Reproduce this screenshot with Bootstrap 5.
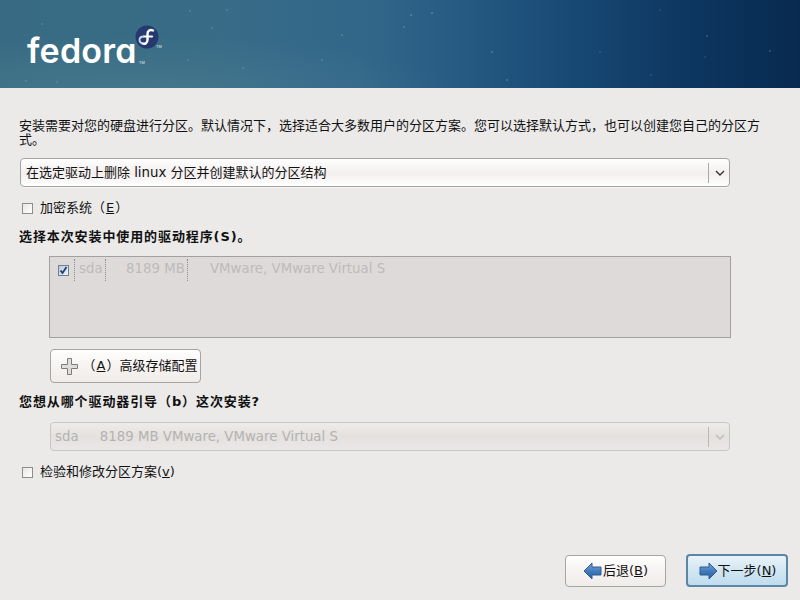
<!DOCTYPE html>
<html lang="zh-CN">
<head>
<meta charset="utf-8">
<title>Fedora 安装</title>
<link href="https://cdn.jsdelivr.net/npm/bootstrap@5.3.0/dist/css/bootstrap.min.css" rel="stylesheet">
<style>
html,body{height:100%;}
body{width:800px;height:600px;overflow:hidden;background:#ebeae9;color:#111;font-family:"DejaVu Sans","Noto Sans CJK TC",sans-serif;font-size:13px;line-height:14px;font-feature-settings:"chws" 0,"palt" 0,"halt" 0;text-spacing-trim:space-all;}
.inst-page{height:600px;}
.inst-lat{font-size:13.33px;}
.inst-banner{height:88px;flex:none;position:relative;overflow:hidden;
 background:
 radial-gradient(circle 1px at 190px 11px,#86a9b6,transparent),
 radial-gradient(circle 1px at 212px 28px,#86a9b6,transparent),
 radial-gradient(circle 1px at 227px 10px,#86a9b6,transparent),
 radial-gradient(circle 1px at 342px 35px,#86a9b6,transparent),
 radial-gradient(circle 1px at 243px 68px,#86a9b6,transparent),
 radial-gradient(circle 1px at 322px 60px,#86a9b6,transparent),
 radial-gradient(circle 1px at 188px 60px,#7a9dac,transparent),
 radial-gradient(circle 1px at 26px 81px,#86a9b6,transparent),
 radial-gradient(circle 1px at 57px 82px,#7a9dac,transparent),
 radial-gradient(circle 1px at 42px 24px,#7a9dac,transparent),
 radial-gradient(circle 1.5px at 411px 15px,#6b93ad,transparent),
 radial-gradient(circle 1.5px at 432px 13px,#6b93ad,transparent),
 radial-gradient(circle 1.5px at 404px 27px,#5f88a4,transparent),
 radial-gradient(circle 1.5px at 492px 52px,#5f88a4,transparent),
 radial-gradient(circle 1.5px at 507px 80px,#5f88a4,transparent),
 radial-gradient(circle 1px at 600px 52px,#4f7898,transparent),
 radial-gradient(circle 1px at 651px 75px,#4f7898,transparent),
 radial-gradient(circle 1.5px at 707px 36px,#3f6a8e,transparent),
 radial-gradient(circle 1.5px at 770px 51px,#3f6a8e,transparent),
 radial-gradient(circle 1px at 705px 57px,#3f6a8e,transparent),
 radial-gradient(circle 1px at 660px 10px,#3f6a8e,transparent),
 radial-gradient(ellipse 330px 60px at 130px 95px,rgba(110,155,160,.25),transparent),
 linear-gradient(90deg,#386b83 0%,#386c86 25%,#33678a 45%,#265a82 58%,#174874 72%,#0d3660 86%,#082a50 100%);}
.inst-logo{position:absolute;left:27px;top:31px;color:#fff;font-family:"Inter",sans-serif;font-feature-settings:"cv11" 1;font-size:34px;line-height:40px;letter-spacing:.2px;font-weight:600;}
.inst-mark{position:absolute;left:135px;top:25px;}
.inst-tm{position:absolute;color:#dfe9ee;font-size:4px;line-height:4px;font-family:"Liberation Sans",sans-serif;}
.inst-tm1{left:139px;top:61px;}
.inst-tm2{left:156px;top:45px;}
.inst-main{flex:1;padding:31px 12px 13px 19px;min-height:0;}
.inst-intro{margin:0 0 11px;width:745px;}
.inst-combo{height:29px;width:710px;margin-left:1px;border:1px solid #a5a3a0;border-radius:4px;background:linear-gradient(#fff,#f5f1f0 45%,#f3efee 55%,#fff);padding:0 0 0 5px;box-shadow:0 1px 0 #f6f6f6;}
.inst-combo-sep{width:1px;height:20px;background:#aaa9a6;margin-right:5px;}
.inst-combo-arrow{width:12px;margin-right:3px;}
.inst-combo.inst-off{width:680px;margin-left:31px;height:29px;border-color:#c9c7c4;background:linear-gradient(#eeecea,#e4e1df 50%,#eae7e6);color:#b4b2b0;padding-left:4px;box-shadow:none;}
.inst-off .inst-combo-sep{background:#b9b7b4;}
.inst-check{margin:14px 0 0 3px;height:14px;gap:7px;}
.inst-box{width:11px;height:11px;border:1px solid #8d8d8b;background:linear-gradient(135deg,#e6e6e4,#fff);flex:none;}
.inst-title{font-weight:700;letter-spacing:.9px;margin:15px 0 0 0;}
.inst-list{width:682px;height:82px;margin:12px 0 0 30px;background:#dedada;border:1px solid #a3a09d;padding:5px 0 0 8px;color:#bdbbb9;}
.inst-cb{width:11px;height:11px;border:1px solid #6f7f92;background:linear-gradient(135deg,#b9c9da,#f0f4f8);margin-right:5px;}
.inst-cell{border-right:1px dotted #8b8b88;height:22px;line-height:14px;padding-top:3px;}
.inst-c0{border-left:1px dotted #8b8b88;padding-left:4px;width:32px;}
.inst-c1{width:82px;padding-left:20px;}
.inst-c2{padding-left:22px;border:0;}
.inst-list-row{height:22px;margin-top:-3px;}
.btn.inst-btn{display:flex;align-items:center;justify-content:center;--bs-btn-padding-x:0;--bs-btn-padding-y:0;font-size:13px;line-height:14px;color:#111;border:1px solid #a7a5a2;border-radius:4px;background:linear-gradient(#fff,#f6f3f2 50%,#efecea);}
.inst-add{width:151px;height:34px;margin:11px 0 0 31px;justify-content:flex-start;padding-left:7px;gap:5px;}
.inst-title2{margin-top:12px;}
.inst-combo2{margin-top:13px;}
.inst-back{width:101px;height:32px;}
.btn.inst-next{width:102px;height:33px;border:2px solid #5c86a6;background:linear-gradient(#e9f3f9,#d2e6f2 50%,#bfdcee);}
.inst-foot{gap:20px;}
.inst-key{margin:0 1px;}
u{text-underline-offset:1px;}
</style>
</head>
<body>
<div class="inst-page d-flex flex-column">
  <div class="inst-banner">
    <span class="inst-logo">fedora</span>
    <svg class="inst-mark" width="24" height="24" viewBox="0 0 24 24" aria-hidden="true">
      <circle cx="12" cy="12" r="11.5" fill="#26396f"/>
      <path d="M18 5.500c-3-1.200-5.500 .3-5.500 3.500v6c0 2.800-2.500 4.500-5 3.500" fill="none" stroke="#fff" stroke-width="2.400" stroke-linecap="round"/>
      <path d="M9 11.500h8" fill="none" stroke="#fff" stroke-width="2.200" stroke-linecap="round"/>
      <path d="M7.500 18.500c-2-.6-3-2-3-3.500 0-2 1.800-3.500 4.500-3.500" fill="none" stroke="#c9d6ea" stroke-width="1.800"/>
    </svg>
    <span class="inst-tm inst-tm1">TM</span>
    <span class="inst-tm inst-tm2">TM</span>
  </div>
  <div class="inst-main d-flex flex-column">
    <p class="inst-intro">安装需要对您的硬盘进行分区。默认情况下，选择适合大多数用户的分区方案。您可以选择默认方式，也可以创建您自己的分区方式。</p>
    <div class="inst-combo d-flex align-items-center">
      <span class="flex-grow-1">在选定驱动上删除 <span class="inst-lat">linux</span> 分区并创建默认的分区结构</span>
      <span class="inst-combo-sep"></span>
      <svg class="inst-combo-arrow" width="12" height="10" viewBox="0 0 12 10" aria-hidden="true"><path d="M2 3l4 4 4-4" fill="none" stroke="#333" stroke-width="1.400"/></svg>
    </div>
    <div class="inst-check d-flex align-items-center"><span class="inst-box"></span><span>加密系统（<u class="inst-key">E</u>）</span></div>
    <div class="inst-title">选择本次安装中使用的驱动程序(S)。</div>
    <div class="inst-list">
      <div class="inst-list-row d-flex align-items-center">
        <span class="inst-cb d-flex align-items-center justify-content-center">
          <svg width="9" height="9" viewBox="0 0 9 9" aria-hidden="true"><path d="M1.500 4.500l2 2.500 4-6" fill="none" stroke="#1d3f78" stroke-width="1.800"/></svg>
        </span>
        <span class="inst-cell inst-c0 inst-lat">sda</span>
        <span class="inst-cell inst-c1 inst-lat">8189 MB</span>
        <span class="inst-cell inst-c2 inst-lat">VMware, VMware Virtual S</span>
      </div>
    </div>
    <button type="button" class="btn inst-btn inst-add">
      <svg width="17" height="17" viewBox="0 0 17 17" aria-hidden="true"><path d="M6.500 .5h4v6h6v4h-6v6h-4v-6h-6v-4h6z" fill="#dedddb" stroke="#7d7d7b"/></svg>
      <span>（<u class="inst-key">A</u>）高级存储配置</span>
    </button>
    <div class="inst-title inst-title2">您想从哪个驱动器引导（b）这次安装?</div>
    <div class="inst-combo inst-off inst-combo2 d-flex align-items-center">
      <span class="flex-grow-1 inst-lat">sda&nbsp;&nbsp;&nbsp;&nbsp;&nbsp;8189 MB VMware, VMware Virtual S</span>
      <span class="inst-combo-sep"></span>
      <svg class="inst-combo-arrow" width="12" height="10" viewBox="0 0 12 10" aria-hidden="true"><path d="M2 3l4 4 4-4" fill="none" stroke="#bbb" stroke-width="1.400"/></svg>
    </div>
    <div class="inst-check d-flex align-items-center"><span class="inst-box"></span><span>检验和修改分区方案(<u>v</u>)</span></div>
    <div class="inst-foot mt-auto d-flex justify-content-end align-items-center">
      <button type="button" class="btn inst-btn inst-back">
        <svg width="20" height="20" viewBox="0 0 20 20" aria-hidden="true"><defs><linearGradient id="instArrow" x1="0" y1="0" x2="0" y2="1"><stop offset="0" stop-color="#7aa6d6"/><stop offset=".55" stop-color="#3f78b8"/><stop offset="1" stop-color="#2a5f9e"/></linearGradient></defs><path d="M1 10l8-8v4h9v8H9v4z" fill="url(#instArrow)" stroke="#2f5c94"/></svg>
        <span>后退(<u>B</u>)</span>
      </button>
      <button type="button" class="btn inst-btn inst-next">
        <svg width="20" height="20" viewBox="0 0 20 20" aria-hidden="true"><path d="M19 10l-8-8v4H2v8h9v4z" fill="url(#instArrow)" stroke="#2f5c94"/></svg>
        <span>下一步(<u>N</u>)</span>
      </button>
    </div>
  </div>
</div>
<script src="https://cdn.jsdelivr.net/npm/bootstrap@5.3.0/dist/js/bootstrap.bundle.min.js"></script>
</body>
</html>
